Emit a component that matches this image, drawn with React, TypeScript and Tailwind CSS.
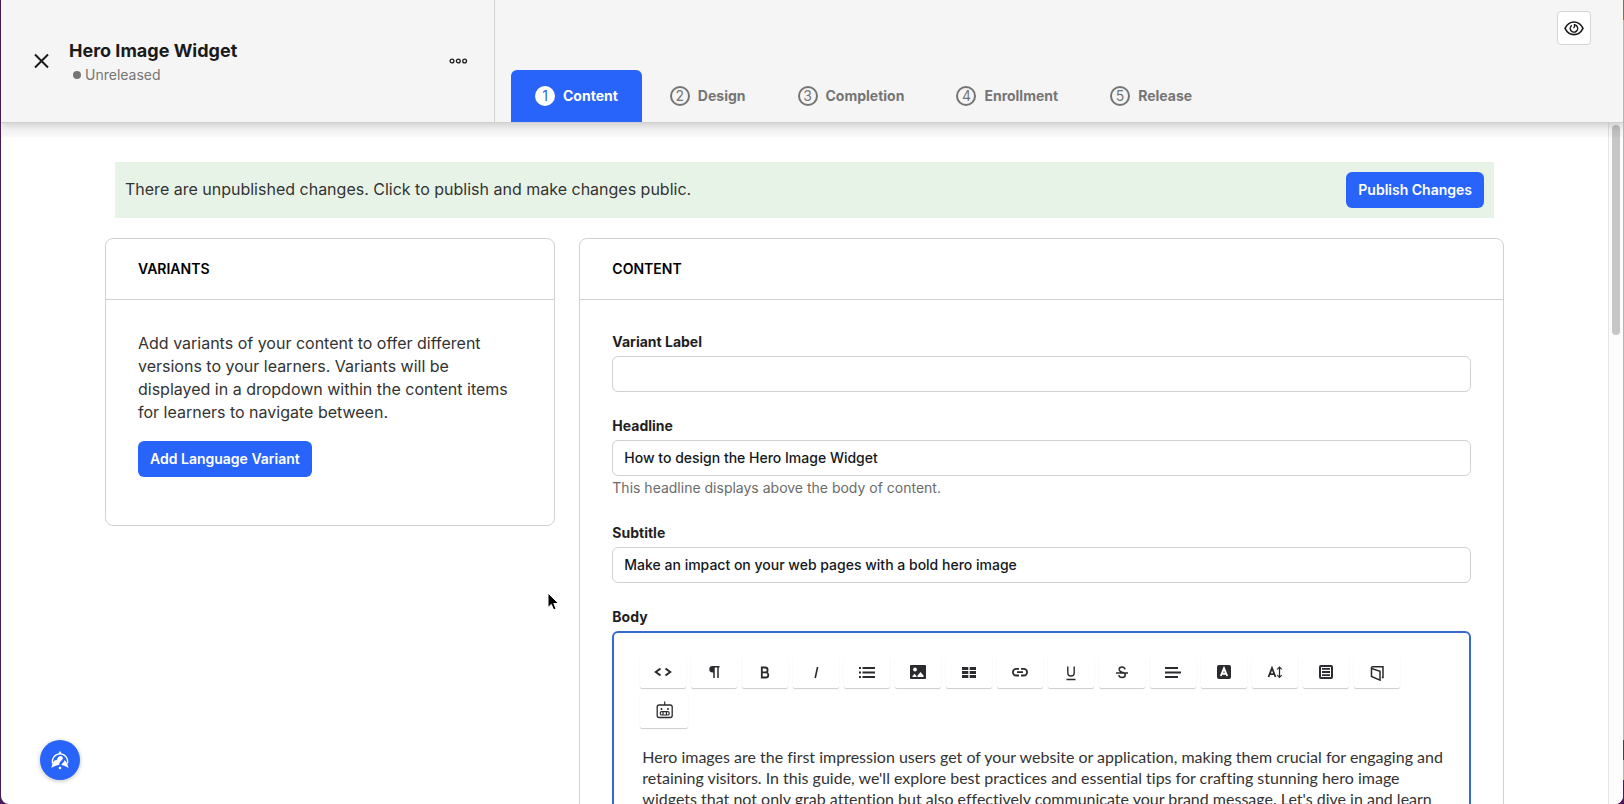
import { useState } from 'react';
import type { ReactNode } from 'react';

const steps = ['Content', 'Design', 'Completion', 'Enrollment', 'Release'];

const bodyText =
  "Hero images are the first impression users get of your website or application, making them crucial for engaging and retaining visitors. In this guide, we'll explore best practices and essential tips for crafting stunning hero image widgets that not only grab attention but also effectively communicate your brand message. Let's dive in and learn";

const tools: { name: string; icon: ReactNode }[] = [
  {
    name: 'Code view',
    icon: <path d="M9.5 8.5 4.800 12l4.700 3.500M14.500 8.500 19.200 12l-4.700 3.500" strokeWidth="2" />,
  },
  {
    name: 'Paragraph format',
    icon: (
      <>
        <path d="M12 6.500v11.500M16 6.500v11.500M17.500 6.700H11" strokeWidth="1.500" />
        <path d="M12 6H10.500a3.200 3.200 0 0 0 0 6.400H12Z" fill="currentColor" stroke="none" />
      </>
    ),
  },
  {
    name: 'Bold',
    icon: (
      <path
        d="M8.800 7.500h3.400a2.300 2.300 0 0 1 0 4.800H8.800ZM8.800 12.300h3.900a2.600 2.600 0 0 1 0 5.200H8.800Z"
        strokeWidth="1.800"
      />
    ),
  },
  { name: 'Italic', icon: <path d="M13.600 7 11.200 18" strokeWidth="1.600" /> },
  {
    name: 'Unordered list',
    icon: <path d="M7.500 8H20M7.500 12.500H20M7.500 17H20M4 8h2M4 12.500h2M4 17h2" strokeWidth="1.800" />,
  },
  {
    name: 'Insert image',
    icon: (
      <>
        <rect x="4" y="5" width="16" height="14" rx="1" fill="currentColor" stroke="none" />
        <circle cx="9" cy="9.500" r="1.900" fill="white" stroke="none" />
        <path d="M6.500 17v-1l2-2.300 2 2.300v1ZM11.500 17v-1.500l3-3.500 3 3.500V17Z" fill="white" stroke="none" />
      </>
    ),
  },
  {
    name: 'Insert table',
    icon: (
      <path
        d="M5 7h6.300v3H5ZM12.700 7H19v3h-6.300ZM5 11h6.300v3H5ZM12.700 11H19v3h-6.300ZM5 15h6.300v3H5ZM12.700 15H19v3h-6.300Z"
        fill="currentColor"
        stroke="none"
      />
    ),
  },
  {
    name: 'Insert link',
    icon: (
      <path
        d="M11 15.500H8.200a3.300 3.300 0 0 1 0-6.600H11M13 8.900h2.800a3.300 3.300 0 0 1 0 6.600H13M9 12.200h6"
        strokeWidth="1.800"
      />
    ),
  },
  {
    name: 'Underline',
    icon: <path d="M8.800 6.500v6.300a3.200 3.200 0 0 0 6.400 0V6.500M7.500 19.500h9" strokeWidth="1.400" />,
  },
  {
    name: 'Strikethrough',
    icon: (
      <path
        d="M15 9.300c-.3-1.300-1.400-2.200-3-2.200S9.200 8 9.200 9.500c0 1.700 1.400 2.300 3 2.800 1.800.5 3 1.200 3 2.800 0 1.500-1.300 2.500-3.200 2.500s-3-1-3.200-2.400M6 13h12"
        strokeWidth="1.500"
      />
    ),
  },
  {
    name: 'Align',
    icon: <path d="M4 8h13M4 12.500h16M4 17h13" strokeWidth="2" />,
  },
  {
    name: 'Text color',
    icon: (
      <>
        <rect x="5" y="5" width="14" height="14" rx="2" fill="currentColor" stroke="none" />
        <path d="M8.800 16 12 8.300 15.200 16M10 13.700h4" stroke="white" strokeWidth="1.900" />
      </>
    ),
  },
  {
    name: 'Font size',
    icon: (
      <>
        <path d="M5.500 17 9 8l3.500 9M6.700 14.100h4.600" strokeWidth="1.800" />
        <path d="M16.500 7v10.500M14.300 9.300l2.200-2.300 2.200 2.300M14.300 15.200l2.200 2.300 2.200-2.300" strokeWidth="1.200" />
      </>
    ),
  },
  {
    name: 'Snippets',
    icon: (
      <>
        <rect x="5" y="5" width="14" height="14" rx="2" fill="currentColor" stroke="none" />
        <rect x="7" y="7" width="10" height="10" fill="white" stroke="none" />
        <path d="M8 8.800h8M8 12h8M8 15.200h8" strokeWidth="1.800" />
      </>
    ),
  },
  {
    name: 'Open in new window',
    icon: (
      <path
        d="M6.500 8.500v8l8.500 3.700v-9L6.500 8.500V7.800a1 1 0 0 1 1-1h10.500v10.700h-1.200"
        strokeWidth="1.500"
      />
    ),
  },
];

const Step = ({ index, label, active, onSelect }: { index: number; label: string; active: boolean; onSelect: () => void }) => (
  <button
    type="button"
    onClick={onSelect}
    className={`flex h-[52px] items-center gap-2 rounded-t-md px-6 text-sm font-bold ${
      active ? 'bg-[#2864fa] text-white' : 'text-[#757575]'
    }`}
  >
    <span
      className={`flex h-5 w-5 items-center justify-center rounded-full border-2 text-sm leading-4 font-normal ${
        active ? 'border-white bg-white text-[#2864fa]' : 'border-[#757575]'
      }`}
    >
      {index}
    </span>
    {label}
  </button>
);

const Card = ({ title, className, children }: { title: string; className: string; children: ReactNode }) => (
  <section className={`rounded-lg border border-[#d1d1d4] ${className}`}>
    <h2 className="border-b border-[#d1d1d4] px-8 py-5 text-sm leading-5 font-semibold text-black uppercase">{title}</h2>
    <div className="px-8 pt-8">{children}</div>
  </section>
);

const Field = ({ id, label, value = '', hint }: { id: string; label: string; value?: string; hint?: string }) => (
  <div className="mb-6">
    <label htmlFor={id} className="mb-1 block text-sm leading-5 font-bold text-[#1f1f1f]">
      {label}
    </label>
    <input
      id={id}
      type="text"
      defaultValue={value}
      className="block h-9 w-full rounded-md border border-[#d1d1d4] px-[11px] pb-0.5 text-sm font-medium text-[#141821] outline-none"
    />
    {hint && <p className="mb-[25px] pt-[2px] text-sm leading-5 text-[#6b6b6b]">{hint}</p>}
  </div>
);

const Header = () => {
  const [activeStep, setActiveStep] = useState(0);

  return (
    <header className="relative z-10 flex h-[123px] shrink-0 border-b border-[#cfcfcf] bg-[#f5f5f5] shadow-[0_14px_2px_rgba(0,0,0,0.035),0_3px_8px_rgba(0,0,0,0.16)]">
      <div className="flex w-[494px] items-center border-r border-[#d1d1d1] pr-[26px] pl-7">
        <button type="button" aria-label="Close" className="p-1 text-[#1a1a1a]">
          <svg className="h-5 w-5" viewBox="0 0 20 20" fill="none" stroke="currentColor" strokeWidth="2">
            <path d="M2 3.500 15 16.500M15 3.500 2 16.500" />
          </svg>
        </button>
        <div className="ml-3 grow pt-1">
          <h1 className="text-lg leading-6 font-bold text-[#1a1a1a]">Hero Image Widget</h1>
          <p className="flex items-center gap-1 pl-1 text-sm leading-6 text-[#757575]">
            <span className="h-2 w-2 rounded-full bg-[#757575]" />
            Unreleased
          </p>
        </div>
        <button type="button" aria-label="More actions" className="text-[#1a1a1a]">
          <svg className="h-5 w-5" viewBox="0 0 20 20" fill="none" stroke="currentColor" strokeWidth="1.300">
            <circle cx="4" cy="10" r="1.900" />
            <circle cx="10.300" cy="10" r="1.900" />
            <circle cx="16.600" cy="10" r="1.900" />
          </svg>
        </button>
      </div>
      <nav className="flex grow items-end gap-1 pl-4">
        {steps.map((step, i) => (
          <Step key={step} index={i + 1} label={step} active={i === activeStep} onSelect={() => setActiveStep(i)} />
        ))}
      </nav>
      <button
        type="button"
        aria-label="Preview"
        className="mt-[11px] mr-8 flex h-[34px] w-[34px] items-center justify-center rounded-sm border border-[#d4d4d4] bg-white text-[#1a1a1a]"
      >
        <svg className="h-5 w-5" viewBox="0 0 20 20" fill="none" stroke="currentColor" strokeWidth="1.600" strokeLinecap="round">
          <path d="M1 10.300c2.200-4.300 5.300-6.300 9-6.300s6.800 2 9 6.300c-2.200 4.300-5.300 6.300-9 6.300S3.200 14.600 1 10.300Z" strokeLinejoin="round" />
          <path d="M7.400 7.700a3.700 3.700 0 1 0 5.300.2c-.6-.6-1.400-1-2.300-1.100" strokeWidth="1.500" />
          <path d="M10.400 6.800c.5 1.300.3 2.300-.7 2.900" strokeWidth="1.200" />
        </svg>
      </button>
    </header>
  );
};

const Editor = () => (
  <div>
    <label htmlFor="body" className="mb-1 block text-sm leading-5 font-bold text-[#1f1f1f]">
      Body
    </label>
    <div className="rounded-md border-2 border-[#3a68cc] pt-6 pr-5 pl-[26px]">
      <div className="flex flex-wrap gap-[5px] text-[#2b2b2f]" role="toolbar" aria-label="Formatting">
        {tools.map((tool) => (
          <button
            key={tool.name}
            type="button"
            aria-label={tool.name}
            className="flex h-[31px] w-[46px] items-center justify-center rounded-b-xs pb-0.5 shadow-[0_1px_1px_rgba(0,0,0,0.2)]"
          >
            <svg className="h-6 w-6" viewBox="0 0 24 24" fill="none" stroke="currentColor">
              {tool.icon}
            </svg>
          </button>
        ))}
        <button
          type="button"
          aria-label="AI assistant"
          className="flex h-[35px] w-12 items-center justify-center rounded-b-xs pb-0.5 shadow-[0_1px_1px_rgba(0,0,0,0.2)]"
        >
          <svg className="h-6 w-6" viewBox="0 0 24 24" fill="none" stroke="currentColor">
            <rect x="5.200" y="7" width="15" height="12.500" rx="2" strokeWidth="1.300" />
            <path d="M12.700 3.500V7" strokeWidth="1.200" />
            <circle cx="9.500" cy="11" r="1" fill="currentColor" stroke="none" />
            <circle cx="16" cy="11" r="1" fill="currentColor" stroke="none" />
            <rect x="8.200" y="13.700" width="9" height="3.300" rx="1.600" strokeWidth="1.200" />
            <path d="M11 13.700V17M14.400 13.700V17" strokeWidth="1.200" />
          </svg>
        </button>
      </div>
      <textarea
        id="body"
        defaultValue={bodyText}
        className="mt-[18px] block h-80 w-full resize-none overflow-hidden pl-[2px] font-[Lato,sans-serif] text-base leading-[21px] text-[#333333] [font-variant-ligatures:none] outline-none"
      />
    </div>
  </div>
);

const App = () => {
  return (
    <div className="flex h-screen overflow-hidden bg-[#4a1a5c] pl-px font-[Inter,sans-serif]">
      <div className="flex min-w-0 grow flex-col overflow-hidden rounded-b-lg bg-white">
        <Header />
        <div className="flex min-h-0 grow">
          <main className="min-w-0 grow overflow-hidden px-4 pt-[39px]">
            <div className="mx-auto max-w-[1399px]">
              <div className="mx-[10px] mb-5 flex items-center justify-between bg-[#e8f3e8] p-[10px] text-[#333333]">
                <p className="pb-0.5">There are unpublished changes. Click to publish and make changes public.</p>
                <button type="button" className="h-9 rounded-md bg-[#2864fa] px-3 text-sm font-semibold text-white">
                  Publish Changes
                </button>
              </div>
              <div className="grid grid-cols-12 items-start gap-6">
                <Card title="Variants" className="col-span-4 pb-12">
                  <p className="pr-2 leading-[23px] text-[#333333]">
                    Add variants of your content to offer different versions to your learners. Variants will be displayed in
                    a dropdown within the content items for learners to navigate between.
                  </p>
                  <button
                    type="button"
                    className="mt-[17px] h-9 rounded-md bg-[#2864fa] px-3 text-sm font-semibold text-white"
                  >
                    Add Language Variant
                  </button>
                </Card>
                <Card title="Content" className="col-span-8 pb-8">
                  <Field id="variant-label" label="Variant Label" />
                  <Field
                    id="headline"
                    label="Headline"
                    value="How to design the Hero Image Widget"
                    hint="This headline displays above the body of content."
                  />
                  <Field id="subtitle" label="Subtitle" value="Make an impact on your web pages with a bold hero image" />
                  <Editor />
                </Card>
              </div>
            </div>
          </main>
          {/* Scrollbar track */}
          <div className="w-[15px] shrink-0 border-l border-[#e6e6e6] bg-[#fcfcfc] pt-[2px] pl-[3px]">
            <div className="h-[210px] w-2 rounded-full bg-[#c6c6c6]" />
          </div>
        </div>
      </div>
      {/* Desktop showing past the window edge */}
      <div className="flex w-px shrink-0 flex-col bg-[#b5b5b5]">
        <div className="h-5 bg-[#a06a20]" />
        <div className="grow" />
        <div className="h-5 bg-[#444444]" />
        <div className="h-5" />
        <div className="h-6 bg-[#4a1a5c]" />
      </div>

      <button
        type="button"
        aria-label="Open launcher"
        className="fixed bottom-6 left-10 z-20 flex h-10 w-10 items-center justify-center rounded-full bg-[#2864fa] text-white shadow-[0_1px_4px_rgba(0,0,0,0.25)]"
      >
        <svg className="h-5 w-5" viewBox="0 0 20 20" fill="none">
          <path d="M2.600 13.500A7.700 7.700 0 0 1 10 3.800a7.700 7.700 0 0 1 7.400 9.700" stroke="currentColor" strokeWidth="1.300" />
          <path d="M8.300 3.800 10 .8l1.700 3Z" fill="currentColor" />
          <path
            d="M1.500 18c.3-3 1.300-5.500 3-7.500L7 9.800c.2-2 1.500-3.600 3.400-3.800 1.600 0 2.600 1.100 2.400 2.500-.2 1.300-1.400 2-2.300 3-.9.900-1.300 2-1.100 3.300C6.400 15.300 4 16.300 1.500 18Z"
            fill="currentColor"
          />
          <path d="M18.500 18c-.5-3.300-1.800-6-3.800-8.100-.4 1.500-1.500 2.500-2.400 3.300-.8.9-.8 1.400-.3 2.100 2.400.3 4.400 1.200 6.500 2.700Z" fill="currentColor" />
          <circle cx="10" cy="18" r="1.300" fill="currentColor" />
        </svg>
      </button>

      {/* Pointer */}
      <svg className="pointer-events-none fixed top-[592px] left-[547px] z-30 h-5 w-3" viewBox="0 0 12 20">
        <path
          d="M1 1v14.500l3.300-3.100 2.300 5.400 2.500-1-2.300-5.300H11.500Z"
          fill="black"
          stroke="white"
          strokeWidth="1"
        />
      </svg>
    </div>
  );
};

export default App;
